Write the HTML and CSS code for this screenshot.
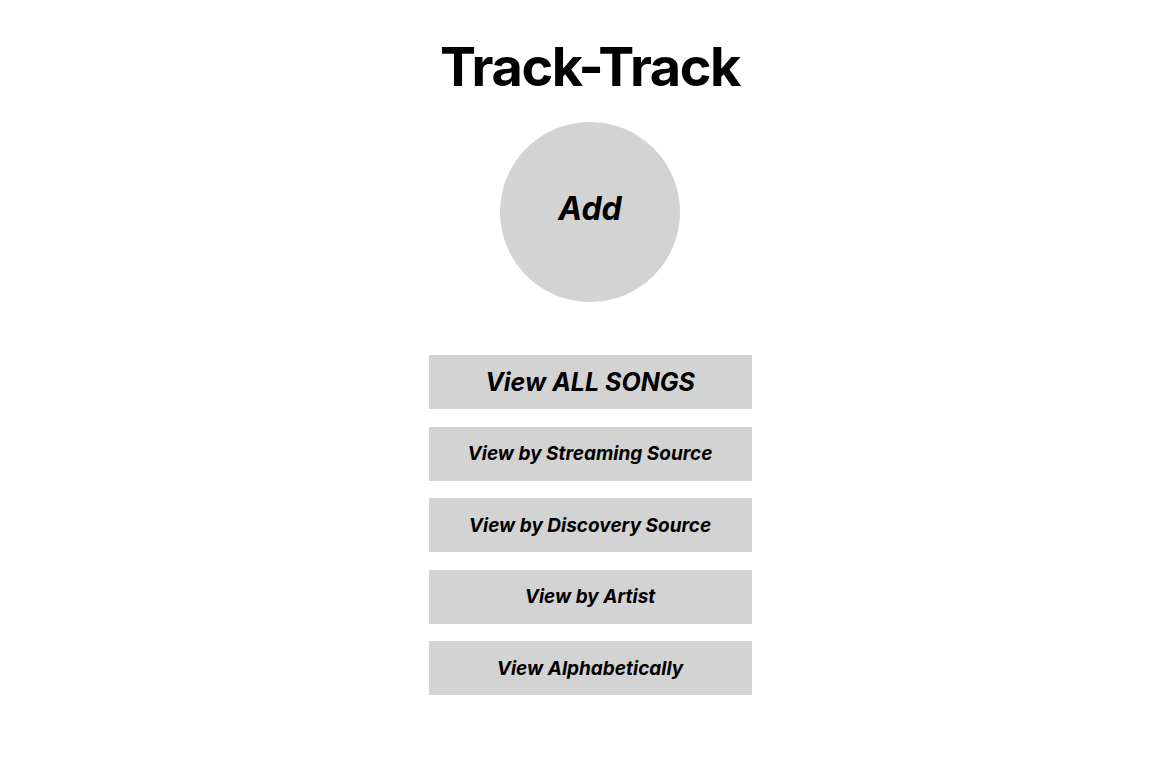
FILE: index.html
```html
<!DOCTYPE html>
<html>
<head>
<meta charset="utf-8">
<link rel="stylesheet" href="styles.css">
</head>
<body>
<main class="app">
  <h1 class="title">Track-Track</h1>
  <button class="add">Add</button>
  <nav class="menu">
    <button class="menu-btn menu-btn--big">View ALL SONGS</button>
    <button class="menu-btn">View by Streaming Source</button>
    <button class="menu-btn">View by Discovery Source</button>
    <button class="menu-btn">View by Artist</button>
    <button class="menu-btn">View Alphabetically</button>
  </nav>
</main>
</body>
</html>
```
FILE: styles.css
```css
* { box-sizing: border-box; }
html, body { margin: 0; padding: 0; background: #fff; }
body { font-family: Inter, "Noto Sans", sans-serif; color: #000; }
.app {
  display: flex;
  flex-direction: column;
  align-items: center;
  padding: 33px 0 0 5px;
}
.title {
  margin: 0;
  font-size: 54px;
  font-weight: 700;
  line-height: 68px;
  letter-spacing: -1.4px;
}
.add {
  margin-top: 21px;
  width: 180px;
  height: 180px;
  border-radius: 50%;
  border: none;
  background: #d3d3d3;
  font-family: inherit;
  font-size: 32px;
  font-weight: 700;
  font-style: italic;
  color: #000;
  padding: 0;
  padding-bottom: 8px;
}
.menu {
  margin-top: 53px;
  display: flex;
  flex-direction: column;
  gap: 17.5px;
}
.menu-btn {
  width: 323px;
  height: 54px;
  border: none;
  background: #d3d3d3;
  font-family: inherit;
  font-size: 19px;
  font-weight: 700;
  font-style: italic;
  color: #000;
  padding: 0;
}
.menu-btn--big { font-size: 25px; }
```
